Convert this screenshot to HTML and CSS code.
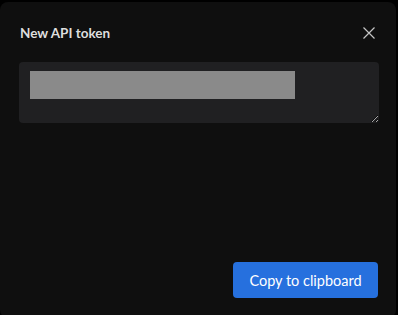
FILE: index.html
```html
<!DOCTYPE html>
<html>
<head>
    <title>New API token</title>
    <link rel="stylesheet" href="styles.css">
</head>
<body>
    <div class="dialog">
        <div class="dialog-header">
            <h2 class="dialog-title">New API token</h2>
            <button class="close-button" aria-label="Close">
                <svg width="12" height="12" viewBox="0 0 12 12">
                    <path d="M0.5 0.5 L11.5 11.5 M11.5 0.5 L0.5 11.5" stroke="#c4c4c4" stroke-width="1.2" fill="none"/>
                </svg>
            </button>
        </div>
        <div class="token-box">
            <textarea class="token-field" readonly></textarea>
            
            <div class="token-mask"></div>
        </div>
        <div class="dialog-footer">
            <button class="button">Copy to clipboard</button>
        </div>
    </div>
</body>
</html>
```

FILE: styles.css
```css
/* Page and dialog frame */
html, body {
    margin: 0;
    padding: 0;
    background-color: #000;
    overflow: hidden;
    color-scheme: dark;
}

body {
    font-family: Lato, "Open Sans", Arial, sans-serif;
    padding-top: 2px;
}

.dialog {
    width: 396px;
    height: 316px;
    box-sizing: border-box;
    background-color: #0f0f0f;
    border-radius: 8px;
    padding: 23px 17px 20px 19px;
    display: flex;
    flex-direction: column;
}

/* Header with title and close icon */
.dialog-header {
    display: flex;
    align-items: center;
    justify-content: space-between;
    height: 16px;
    margin-bottom: 21px;
}

.dialog-title {
    margin: 0 0 0 1px;
    font-size: 13.5px;
    font-weight: bold;
    color: #dedede;
}

.close-button {
    background: none;
    border: none;
    padding: 0;
    margin-right: 4px;
    cursor: pointer;
    display: flex;
}

/* Token field */
.token-box {
    position: relative;
}

.token-field {
    display: block;
    width: 100%;
    height: 61px;
    box-sizing: border-box;
    background-color: #202022;
    border: none;
    border-radius: 4px;
    resize: vertical;
    outline: none;
}

.token-mask {
    position: absolute;
    left: 11px;
    top: 9px;
    width: 265px;
    height: 28px;
    background-color: #8a8a8a;
}

/* Footer button */
.dialog-footer {
    margin-top: auto;
    display: flex;
    justify-content: flex-end;
    padding-right: 1px;
}

.button {
    background-color: #2670de;
    color: #fff;
    width: 145px;
    height: 36px;
    border: none;
    border-radius: 4px;
    cursor: pointer;
    font-family: Lato, "Open Sans", Arial, sans-serif;
    font-size: 14.5px;
}

.button:hover {
    background-color: #1f5fc0;
}
```
